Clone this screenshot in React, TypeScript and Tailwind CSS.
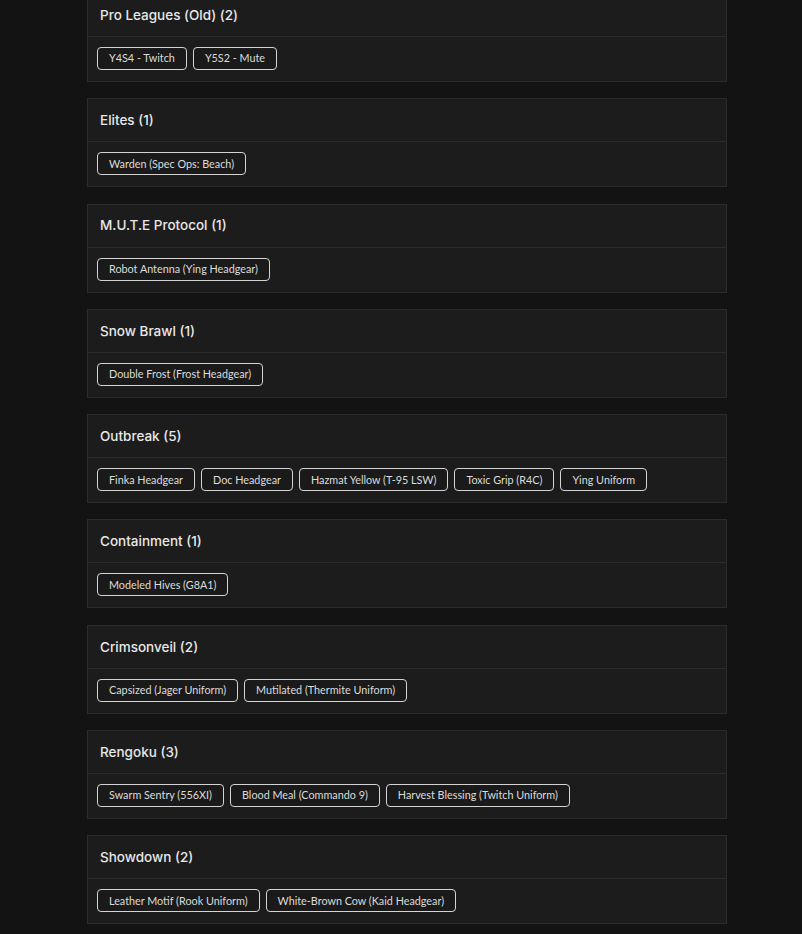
const groups: { name: string; items: string[] }[] = [
  { name: "Pro Leagues (Old)", items: ["Y4S4 - Twitch", "Y5S2 - Mute"] },
  { name: "Elites", items: ["Warden (Spec Ops: Beach)"] },
  { name: "M.U.T.E Protocol", items: ["Robot Antenna (Ying Headgear)"] },
  { name: "Snow Brawl", items: ["Double Frost (Frost Headgear)"] },
  {
    name: "Outbreak",
    items: [
      "Finka Headgear",
      "Doc Headgear",
      "Hazmat Yellow (T-95 LSW)",
      "Toxic Grip (R4C)",
      "Ying Uniform"
    ]
  },
  { name: "Containment", items: ["Modeled Hives (G8A1)"] },
  {
    name: "Crimsonveil",
    items: ["Capsized (Jager Uniform)", "Mutilated (Thermite Uniform)"]
  },
  {
    name: "Rengoku",
    items: [
      "Swarm Sentry (556XI)",
      "Blood Meal (Commando 9)",
      "Harvest Blessing (Twitch Uniform)"
    ]
  },
  {
    name: "Showdown",
    items: ["Leather Motif (Rook Uniform)", "White-Brown Cow (Kaid Headgear)"]
  }
];

export default function App() {
  return (
    <div
      className="min-h-[934px] overflow-hidden bg-[#131313] text-[#e6e6e6]"
      style={{ fontFamily: "Inter, 'Open Sans', sans-serif" }}
    >
      <div className="-mt-[7px] ml-[87px] flex w-[640px] flex-col gap-[16.3px]">
        {groups.map((group) => (
          <section
            key={group.name}
            className="border border-[#2b2b2b] bg-[#1c1c1c]"
          >
            <div className="flex h-[43px] items-center border-b border-[#2b2b2b] px-3">
              <h2 className="text-[13.5px] font-medium text-[#e8e8e8]">
                {group.name} ({group.items.length})
              </h2>
            </div>
            <div className="flex flex-wrap gap-[6px] px-[9px] pt-[10px] pb-[11px]">
              {group.items.map((item) => (
                <span
                  key={item}
                  className="flex h-[23px] items-center rounded-[4px] border border-[#d4d4d4] bg-[#1a1a1a] px-[11px] font-['Lato'] text-[10.8px] text-[#dcdcdc]"
                >
                  {item}
                </span>
              ))}
            </div>
          </section>
        ))}
      </div>
    </div>
  );
}
